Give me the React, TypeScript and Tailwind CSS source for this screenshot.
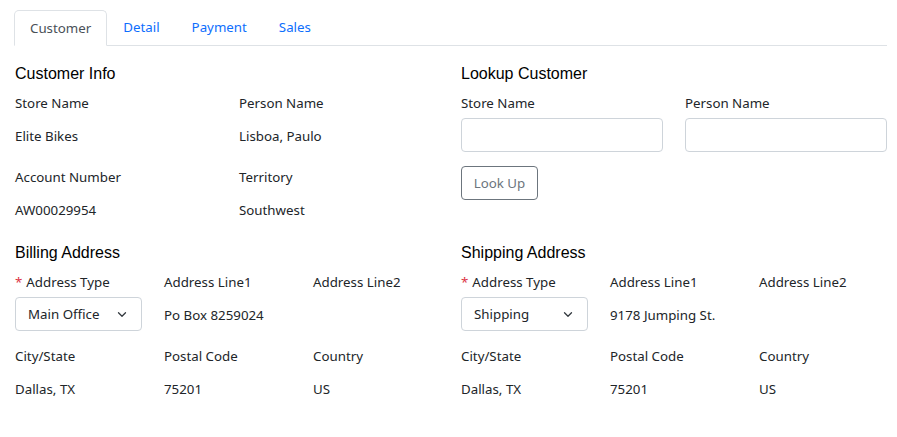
import React from "react";

const body = "font-['Noto_Sans',sans-serif]";
const heading = "font-['Liberation_Sans',Arial,sans-serif] font-normal text-[16px] leading-[19px] text-black";

function Field({ label, required, children }: { label: string; required?: boolean; children: React.ReactNode }) {
  const isText = typeof children === "string";
  return (
    <div className="flex flex-col">
      <div className="text-[13.3px] leading-[21px] text-[#212529] mb-1 whitespace-nowrap">
        {required && <span className="text-[#dc3545] mr-1">*</span>}
        {label}
      </div>
      <div
        className={
          isText
            ? "h-[34px] flex items-center pt-[3px] text-[13.3px] text-[#212529] whitespace-nowrap"
            : "h-[34px] flex items-center text-[13.3px] text-[#212529] whitespace-nowrap"
        }
      >
        {children}
      </div>
    </div>
  );
}

function Select({ value }: { value: string }) {
  return (
    <div className="w-[127px] h-[34px] border border-[#ced4da] rounded-[4px] flex items-center justify-between pl-3 pr-[14px] pt-px text-[13.3px] text-[#212529]">
      <span>{value}</span>
      <svg width="10" height="7" viewBox="0 0 10 7" fill="none" stroke="#343a40" strokeWidth="1.3" strokeLinecap="round" strokeLinejoin="round">
        <path d="M1.5 1.8l3.5 3.5 3.5-3.5" />
      </svg>
    </div>
  );
}

function Address({ title, type, line1 }: { title: string; type: string; line1: string }) {
  return (
    <div>
      <h3 className={`${heading} mb-[10px]`}>{title}</h3>
      <div className="grid grid-cols-3 gap-x-[21px] gap-y-[15px]">
        <Field label="Address Type" required>
          <Select value={type} />
        </Field>
        <Field label="Address Line1">{line1}</Field>
        <Field label="Address Line2">{""}</Field>
        <Field label="City/State">Dallas, TX</Field>
        <Field label="Postal Code">75201</Field>
        <Field label="Country">US</Field>
      </div>
    </div>
  );
}

export default function App() {
  const tabs = ["Customer", "Detail", "Payment", "Sales"];
  return (
    <div className={`${body} bg-white w-[897px] h-[437px] pt-[10px] pl-[14px] pr-[10px]`}>
      <div className="flex border-b border-[#dee2e6]">
        {tabs.map((t, i) => (
          <div
            key={t}
            className={
              i === 0
                ? "px-[15px] pt-px h-[36px] flex items-center text-[13.3px] text-[#495057] border border-[#dee2e6] border-b-white rounded-t-[5px] -mb-px bg-white"
                : "px-4 pt-px h-[35px] flex items-center text-[13.3px] text-[#0d6efd]"
            }
          >
            {t}
          </div>
        ))}
      </div>

      <div className="grid grid-cols-2 gap-x-[20px] pl-px mt-[18px]">
        <div>
          <h3 className={`${heading} mb-[10px]`}>Customer Info</h3>
          <div className="grid grid-cols-2 gap-x-[22px] gap-y-[15px]">
            <Field label="Store Name">Elite Bikes</Field>
            <Field label="Person Name">Lisboa, Paulo</Field>
            <Field label="Account Number">AW00029954</Field>
            <Field label="Territory">Southwest</Field>
          </div>
        </div>
        <div>
          <h3 className={`${heading} mb-[10px]`}>Lookup Customer</h3>
          <div className="grid grid-cols-2 gap-x-[22px]">
            <Field label="Store Name">
              <div className="w-full h-[34px] border border-[#ced4da] rounded-[4px]" />
            </Field>
            <Field label="Person Name">
              <div className="w-full h-[34px] border border-[#ced4da] rounded-[4px]" />
            </Field>
          </div>
          <button className="mt-[14px] w-[77px] h-[34px] border border-[#6c757d] rounded-[4px] pt-px text-[13.3px] text-[#6c757d] flex items-center justify-center">
            Look Up
          </button>
        </div>

        <div className="mt-[17px]">
          <Address title="Billing Address" type="Main Office" line1="Po Box 8259024" />
        </div>
        <div className="mt-[17px]">
          <Address title="Shipping Address" type="Shipping" line1="9178 Jumping St." />
        </div>
      </div>
    </div>
  );
}
